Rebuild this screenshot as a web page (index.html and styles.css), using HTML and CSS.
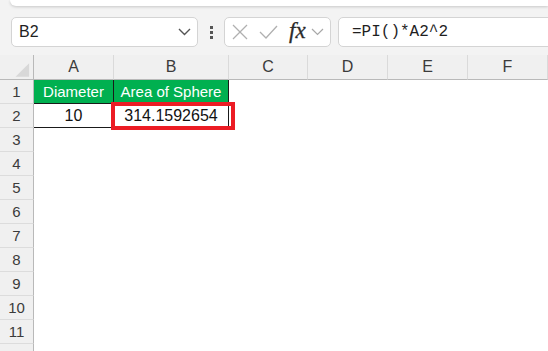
FILE: index.html
```html
<!DOCTYPE html>
<html lang="en">
<head>
  <meta charset="UTF-8" />
  <meta name="viewport" content="width=device-width,initial-scale=1.0">
  <title>Area of Sphere</title>
  <link rel="stylesheet" href="styles.css">
</head>
<body>
  <div class="ribbon-edge"></div>

  <div class="toolbar">
    <div class="name-box">
      <span>B2</span>
      <svg class="chev" width="13" height="8" viewBox="0 0 13 8"><polyline points="1,1 6.5,6.5 12,1" /></svg>
    </div>
    <div class="grip"><i></i><i></i><i></i></div>
    <div class="fx-group">
      <svg class="ico-x" width="16" height="16" viewBox="0 0 16 16"><line x1="1" y1="1" x2="15" y2="15" /><line x1="15" y1="1" x2="1" y2="15" /></svg>
      <svg class="ico-ok" width="19" height="14" viewBox="0 0 19 14"><polyline points="1,7 7,13 18,1" /></svg>
      <span class="fx">fx</span>
      <svg class="chev light" width="13" height="8" viewBox="0 0 13 8"><polyline points="1,1 6.5,6.5 12,1" /></svg>
    </div>
    <div class="formula">=PI()*A2^2</div>
  </div>

  <div class="sheet">
    <div class="grid">
      <div class="corner"><svg width="34" height="25" viewBox="0 0 34 25"><polygon points="30,8 30,22 16,22" /></svg></div>
      <div class="ch">A</div>
      <div class="ch">B</div>
      <div class="ch">C</div>
      <div class="ch">D</div>
      <div class="ch">E</div>
      <div class="ch">F</div>

      <div class="rh">1</div>
      <div class="cell head">Diameter</div>
      <div class="cell head">Area of Sphere</div>
      <div class="cell"></div><div class="cell"></div><div class="cell"></div><div class="cell"></div>

      <div class="rh">2</div>
      <div class="cell data">10</div>
      <div class="cell data">314.1592654</div>
      <div class="cell"></div><div class="cell"></div><div class="cell"></div><div class="cell"></div>

      <div class="rh">3</div><div class="blank"></div>
      <div class="rh">4</div><div class="blank"></div>
      <div class="rh">5</div><div class="blank"></div>
      <div class="rh">6</div><div class="blank"></div>
      <div class="rh">7</div><div class="blank"></div>
      <div class="rh">8</div><div class="blank"></div>
      <div class="rh">9</div><div class="blank"></div>
      <div class="rh">10</div><div class="blank"></div>
      <div class="rh">11</div><div class="blank"></div>
      <div class="rh">12</div><div class="blank"></div>
    </div>

    <div class="highlight"></div>
  </div>
</body>
</html>
```

FILE: styles.css
```css
html, body {
  margin: 0;
  padding: 0;
  height: 351px;
  overflow: hidden;
  background-color: #f3f3f3;
  font-family: "Liberation Sans", Arial, sans-serif;
  color: #222;
}

.ribbon-edge {
  margin-left: 10px;
  height: 6px;
  background: #fff;
  border-bottom-left-radius: 8px;
  box-shadow: 0 1px 3px rgba(0,0,0,0.18);
}

/* formula bar */
.toolbar {
  display: flex;
  align-items: center;
  height: 30px;
  margin-top: 11px;
  padding-left: 11px;
}

.name-box {
  box-sizing: border-box;
  width: 187px;
  height: 30px;
  display: flex;
  align-items: center;
  justify-content: space-between;
  padding: 0 6px 0 7px;
  background: #fff;
  border: 1px solid #d4d4d4;
  border-radius: 5px;
  font-size: 16px;
  color: #1f1f1f;
}

.chev polyline {
  fill: none;
  stroke: #555;
  stroke-width: 1.4;
}

.chev.light polyline {
  stroke: #a8a8a8;
  stroke-width: 1.2;
}

.grip {
  width: 26px;
  display: flex;
  flex-direction: column;
  align-items: center;
  gap: 2px;
}

.grip i {
  display: block;
  width: 3px;
  height: 3px;
  background: #555;
}

.fx-group {
  box-sizing: border-box;
  width: 107px;
  height: 30px;
  display: flex;
  align-items: center;
  padding-left: 7px;
  background: #fff;
  border: 1px solid #d4d4d4;
  border-radius: 5px;
}

.ico-x line,
.ico-ok polyline {
  fill: none;
  stroke: #b0b0b0;
  stroke-width: 1.3;
}

.ico-ok {
  margin-left: 11px;
}

.fx {
  margin-left: 11px;
  font-family: "Liberation Serif", "Times New Roman", serif;
  font-style: italic;
  font-size: 23px;
  line-height: 1;
  color: #2b2b2b;
  margin-top: -3px;
  -webkit-text-stroke: 0.3px #2b2b2b;
}

.fx-group .chev {
  margin-left: 5px;
}

.formula {
  box-sizing: border-box;
  flex: 1;
  height: 30px;
  margin-left: 7px;
  margin-right: -10px;
  padding-left: 13px;
  display: flex;
  align-items: center;
  background: #fff;
  border: 1px solid #d4d4d4;
  border-radius: 5px;
  font-family: "Liberation Mono", "Courier New", monospace;
  font-size: 16px;
  color: #1f1f1f;
}

/* worksheet */
.sheet {
  position: relative;
  margin-top: 8px;
}

.grid {
  display: grid;
  grid-template-columns: 34px 80px 115px 79px 80px 80px 1fr;
  grid-template-rows: 25px;
  grid-auto-rows: 24px;
  font-size: 15px;
}

.grid > div {
  box-sizing: border-box;
  display: flex;
  align-items: center;
  justify-content: center;
}

.corner {
  background: #f0f0f0;
  border-right: 1px solid #b9b9b9;
  border-bottom: 1px solid #b9b9b9;
}

.corner svg {
  display: block;
}

.corner polygon {
  fill: #d8d8d8;
}

.ch {
  background: #f0f0f0;
  color: #3b3b3b;
  font-size: 16px;
  border-right: 1px solid #dadada;
  border-bottom: 1px solid #b9b9b9;
}

.rh {
  background: #f0f0f0;
  color: #3b3b3b;
  border-right: 1px solid #b9b9b9;
  border-bottom: 1px solid #dcdcdc;
}

.cell,
.blank {
  background: #fff;
}

.blank {
  grid-column: 2 / -1;
}

.head {
  background: #00b050;
  color: #fff;
  border-right: 1px solid #1a1a1a;
  border-bottom: 1px solid #1a1a1a;
}

.data {
  font-size: 16px;
  color: #111;
  border-right: 1px solid #1a1a1a;
  border-bottom: 1px solid #1a1a1a;
}

.highlight {
  position: absolute;
  top: 47px;
  left: 111px;
  width: 124px;
  height: 28px;
  box-sizing: border-box;
  border: 4px solid #ec1c24;
}
```
